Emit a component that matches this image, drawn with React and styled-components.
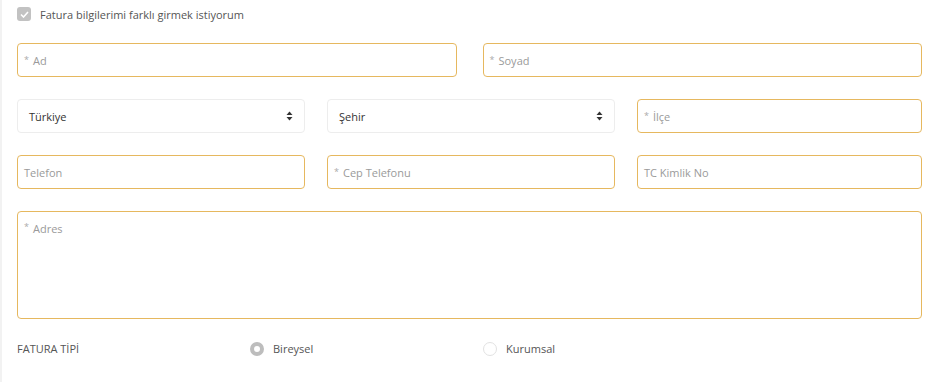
import React from "react";
import styled, { createGlobalStyle } from "styled-components";

const Global = createGlobalStyle`
  html, body { margin: 0; padding: 0; background: #fff; }
  body { font-family: "Open Sans", "Liberation Sans", sans-serif; }
`;

const Page = styled.div`
  width: 937px;
  height: 382px;
  box-sizing: border-box;
  border-left: 2px solid #f2f2f2;
  padding: 7px 15px 0 15px;
  display: flex;
  flex-direction: column;
`;

const CheckRow = styled.label`
  display: flex;
  align-items: center;
  gap: 9px;
  height: 14px;
  font-size: 11px;
  color: #555;
  margin-bottom: 22px;
`;

const CheckBox = styled.span`
  width: 14px;
  height: 14px;
  border-radius: 3px;
  background: #c2c2c2;
  display: flex;
  align-items: center;
  justify-content: center;
`;

const Row = styled.div`
  display: grid;
  grid-template-columns: ${(p) => p.cols};
  column-gap: ${(p) => p.gap}px;
  margin-bottom: 22px;
`;

const Field = styled.div`
  height: ${(p) => p.h || 34}px;
  box-sizing: border-box;
  border: 1px solid #e6b85f;
  border-radius: 4px;
  display: flex;
  align-items: ${(p) => (p.h ? "flex-start" : "center")};
  padding: ${(p) => (p.h ? "9px 6px 0" : "0 6px")};
  font-size: 11px;
  color: #9a9a9a;
`;

const Star = styled.span`
  font-size: 9px;
  color: #aaa;
  margin-right: 4px;
  align-self: flex-start;
  margin-top: ${(p) => (p.area ? "-1px" : "9px")};
`;

const Select = styled.div`
  height: 34px;
  box-sizing: border-box;
  border: 1px solid #ededed;
  border-radius: 4px;
  display: flex;
  align-items: center;
  justify-content: space-between;
  padding: 0 11px 0 11px;
  font-size: 11px;
  color: #333;
`;

const TypeRow = styled.div`
  display: grid;
  grid-template-columns: 233px 233px 1fr;
  align-items: center;
  margin-top: 22px;
  font-size: 11px;
  color: #555;
`;

const Option = styled.label`
  display: flex;
  align-items: center;
  gap: 9px;
`;

const Radio = styled.span`
  width: 14px;
  height: 14px;
  box-sizing: border-box;
  border-radius: 50%;
  background: #fff;
  border: ${(p) => (p.checked ? "4px solid #bdbdbd" : "1px solid #e2e2e2")};
`;

const Arrows = () => (
  <svg width="7" height="10" viewBox="0 0 7 10">
    <path d="M3.5 0.5 L6.5 4 L0.5 4 Z" fill="#333" />
    <path d="M3.5 9.5 L6.5 6 L0.5 6 Z" fill="#333" />
  </svg>
);

const Input = ({ label, req }) => (
  <Field>
    {req && <Star>*</Star>}
    {label}
  </Field>
);

export default function App() {
  return (
    <>
      <Global />
      <Page>
        <CheckRow>
          <CheckBox>
            <svg width="9" height="7" viewBox="0 0 9 7">
              <path d="M1 3.5 L3.5 6 L8 1" stroke="#fff" strokeWidth="1.6" fill="none" />
            </svg>
          </CheckBox>
          Fatura bilgilerimi farklı girmek istiyorum
        </CheckRow>
        <Row cols="1fr 1fr" gap={26}>
          <Input label="Ad" req />
          <Input label="Soyad" req />
        </Row>
        <Row cols="288px 288px 1fr" gap={22}>
          <Select>
            Türkiye
            <Arrows />
          </Select>
          <Select>
            Şehir
            <Arrows />
          </Select>
          <Input label="İlçe" req />
        </Row>
        <Row cols="288px 288px 1fr" gap={22}>
          <Input label="Telefon" />
          <Input label="Cep Telefonu" req />
          <Input label="TC Kimlik No" />
        </Row>
        <Field h={108}>
          <Star area>*</Star>
          Adres
        </Field>
        <TypeRow>
          <span>FATURA TİPİ</span>
          <Option>
            <Radio checked />
            Bireysel
          </Option>
          <Option>
            <Radio />
            Kurumsal
          </Option>
        </TypeRow>
      </Page>
    </>
  );
}
